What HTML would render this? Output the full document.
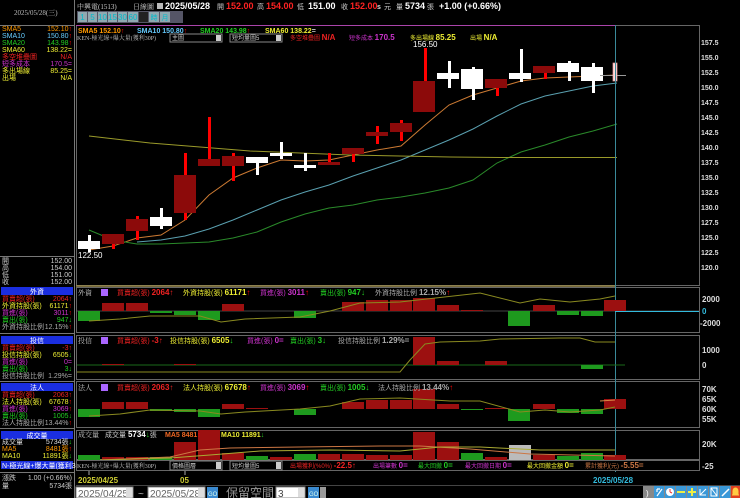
<!DOCTYPE html>
<html><head><meta charset="utf-8"><style>
html,body{margin:0;padding:0;background:#000;width:740px;height:498px;overflow:hidden}
svg{display:block}
text{font-family:"Liberation Sans","Noto Sans CJK TC",sans-serif;font-size:7px}
.m{font-family:"Liberation Serif","Noto Serif CJK SC",serif}
.ax{font-size:8px;font-weight:bold;fill:#ddd}
</style></head><body>
<svg width="740" height="498" viewBox="0 0 740 498" xmlns="http://www.w3.org/2000/svg">
<rect width="740" height="498" fill="#000"/>
<line x1="74.5" y1="0" x2="74.5" y2="498" stroke="#777"/>
<line x1="0" y1="25.5" x2="74" y2="25.5" stroke="#777"/>
<line x1="0" y1="256.5" x2="74" y2="256.5" stroke="#777"/>
<text x="14" y="15" fill="#bbb" class="m">2025/05/28(三)</text>
<g class="m">
<text x="2" y="31" fill="#f90">SMA5</text><text x="72" y="31" fill="#f90" text-anchor="end">152.10<tspan fill="#f00">↑</tspan></text>
<text x="2" y="38" fill="#6cf">SMA10</text><text x="72" y="38" fill="#6cf" text-anchor="end">150.80<tspan fill="#f00">↑</tspan></text>
<text x="2" y="45" fill="#2c2">SMA20</text><text x="72" y="45" fill="#2c2" text-anchor="end">143.98<tspan fill="#f00">↑</tspan></text>
<text x="2" y="52" fill="#ee3">SMA60</text><text x="72" y="52" fill="#ee3" text-anchor="end">138.22=</text>
<text x="2" y="59" fill="#e22">多空堆疊圖</text><text x="72" y="59" fill="#e22" text-anchor="end">N/A</text>
<text x="2" y="66" fill="#c3c">短多成本</text><text x="72" y="66" fill="#c3c" text-anchor="end">170.5=</text>
<text x="2" y="73" fill="#ee3">多出場線</text><text x="72" y="73" fill="#ee3" text-anchor="end">85.25=</text>
<text x="2" y="80" fill="#ee3">出場</text><text x="72" y="80" fill="#ee3" text-anchor="end">N/A</text>
<text x="2" y="263" fill="#ccc">開</text><text x="72" y="263" fill="#ccc" text-anchor="end">152.00</text>
<text x="2" y="270" fill="#ccc">高</text><text x="72" y="270" fill="#ccc" text-anchor="end">154.00</text>
<text x="2" y="277" fill="#ccc">低</text><text x="72" y="277" fill="#ccc" text-anchor="end">151.00</text>
<text x="2" y="284" fill="#ccc">收</text><text x="72" y="284" fill="#ccc" text-anchor="end">152.00</text>
</g>
<g class="m">
<rect x="1" y="287" width="72" height="8" fill="#1a2ee0"/><text x="37" y="294" fill="#fff" text-anchor="middle">外資</text>
<text x="2" y="301" fill="#e22">買賣超(張)</text><text x="72" y="301" fill="#e22" text-anchor="end">2064↑</text>
<text x="2" y="308" fill="#ee3">外資持股(張)</text><text x="72" y="308" fill="#ee3" text-anchor="end">61171<tspan fill="#f00">↑</tspan></text>
<text x="2" y="315" fill="#c3c">買進(張)</text><text x="72" y="315" fill="#c3c" text-anchor="end">3011<tspan fill="#f00">↑</tspan></text>
<text x="2" y="322" fill="#2c2">賣出(張)</text><text x="72" y="322" fill="#2c2" text-anchor="end">947↓</text>
<text x="2" y="329" fill="#aaa">外資持股比例</text><text x="72" y="329" fill="#aaa" text-anchor="end">12.15%<tspan fill="#f00">↑</tspan></text>
<line x1="0" y1="333.5" x2="74" y2="333.5" stroke="#777"/>
<rect x="1" y="336" width="72" height="8" fill="#1a2ee0"/><text x="37" y="343" fill="#fff" text-anchor="middle">投信</text>
<text x="2" y="350" fill="#e22">買賣超(張)</text><text x="72" y="350" fill="#e22" text-anchor="end">-3↑</text>
<text x="2" y="357" fill="#ee3">投信持股(張)</text><text x="72" y="357" fill="#ee3" text-anchor="end">6505<tspan fill="#2c2">↓</tspan></text>
<text x="2" y="364" fill="#c3c">買進(張)</text><text x="72" y="364" fill="#c3c" text-anchor="end">0=</text>
<text x="2" y="371" fill="#2c2">賣出(張)</text><text x="72" y="371" fill="#2c2" text-anchor="end">3↓</text>
<text x="2" y="378" fill="#aaa">投信持股比例</text><text x="72" y="378" fill="#aaa" text-anchor="end">1.29%=</text>
<line x1="0" y1="381.5" x2="74" y2="381.5" stroke="#777"/>
<rect x="1" y="383" width="72" height="8" fill="#1a2ee0"/><text x="37" y="390" fill="#fff" text-anchor="middle">法人</text>
<text x="2" y="397" fill="#e22">買賣超(張)</text><text x="72" y="397" fill="#e22" text-anchor="end">2063↑</text>
<text x="2" y="404" fill="#ee3">法人持股(張)</text><text x="72" y="404" fill="#ee3" text-anchor="end">67678<tspan fill="#f00">↑</tspan></text>
<text x="2" y="411" fill="#c3c">買進(張)</text><text x="72" y="411" fill="#c3c" text-anchor="end">3069<tspan fill="#f00">↑</tspan></text>
<text x="2" y="418" fill="#2c2">賣出(張)</text><text x="72" y="418" fill="#2c2" text-anchor="end">1005↓</text>
<text x="2" y="425" fill="#aaa">法人持股比例</text><text x="72" y="425" fill="#aaa" text-anchor="end">13.44%<tspan fill="#f00">↑</tspan></text>
<line x1="0" y1="428.5" x2="74" y2="428.5" stroke="#777"/>
<rect x="1" y="431" width="72" height="8" fill="#1a2ee0"/><text x="37" y="438" fill="#fff" text-anchor="middle">成交量</text>
<text x="2" y="444" fill="#ddd">成交量</text><text x="72" y="444" fill="#ddd" text-anchor="end">5734張<tspan fill="#2c2">↓</tspan></text>
<text x="2" y="451" fill="#f90">MA5</text><text x="72" y="451" fill="#f90" text-anchor="end">8481張<tspan fill="#f00">↑</tspan></text>
<text x="2" y="458" fill="#ee3">MA10</text><text x="72" y="458" fill="#ee3" text-anchor="end">11891張<tspan fill="#2c2">↓</tspan></text>
<rect x="1" y="461" width="72" height="8" fill="#1a2ee0"/><text x="2" y="468" fill="#fff">N-極光線+爆大量(獲利30</text>
<line x1="0" y1="472.5" x2="74" y2="472.5" stroke="#777"/>
<text x="2" y="480" fill="#ccc">漲跌</text><text x="72" y="480" fill="#ccc" text-anchor="end">1.00 (+0.66%)</text>
<text x="2" y="488" fill="#ccc">量</text><text x="72" y="488" fill="#ccc" text-anchor="end">5734張</text>
</g>
<g>
<text x="77" y="9" fill="#ccc" class="m">中興電(1513)</text>
<text x="133" y="9" fill="#ccc" class="m">日線圖</text>
<rect x="157" y="3" width="6" height="6" fill="#bbb"/>
<text x="165" y="9" fill="#fff" style="font-size:9px;font-weight:bold">2025/05/28</text>
<text x="217" y="9" fill="#ccc">開</text><text x="226" y="9" fill="#f22" style="font-size:9px;font-weight:bold">152.00</text>
<text x="257" y="9" fill="#ccc">高</text><text x="266" y="9" fill="#f22" style="font-size:9px;font-weight:bold">154.00</text>
<text x="297" y="9" fill="#ccc">低</text><text x="308" y="9" fill="#fff" style="font-size:9px;font-weight:bold">151.00</text>
<text x="341" y="9" fill="#ccc">收</text><text x="350" y="9" fill="#f22" style="font-size:9px;font-weight:bold">152.00</text>
<text x="377" y="9" fill="#ddd" style="font-weight:bold">s</text><text x="384" y="9" fill="#ccc">元</text>
<text x="396" y="9" fill="#ccc">量</text><text x="405" y="9" fill="#fff" style="font-size:9px;font-weight:bold">5734</text><text x="427" y="9" fill="#ccc">張</text>
<text x="439" y="9" fill="#fff" style="font-size:9px;font-weight:bold">+1.00 (+0.66%)</text>
</g>
<g style="font-size:8px">
<rect x="77" y="11" width="106" height="12" fill="#556"/>
<rect x="78" y="12" width="9" height="10" fill="#90a8b0"/><text x="82.5" y="20" fill="#0bc" text-anchor="middle" style="font-size:8px">1</text>
<rect x="88" y="12" width="9" height="10" fill="#90a8b0"/><text x="92.5" y="20" fill="#0bc" text-anchor="middle" style="font-size:8px">5</text>
<rect x="98" y="12" width="9" height="10" fill="#90a8b0"/><text x="102.5" y="20" fill="#0bc" text-anchor="middle" style="font-size:8px">10</text>
<rect x="108" y="12" width="9" height="10" fill="#90a8b0"/><text x="112.5" y="20" fill="#0bc" text-anchor="middle" style="font-size:8px">15</text>
<rect x="118" y="12" width="9" height="10" fill="#90a8b0"/><text x="122.5" y="20" fill="#0bc" text-anchor="middle" style="font-size:8px">30</text>
<rect x="128" y="12" width="10" height="10" fill="#90a8b0"/><text x="133" y="20" fill="#0bc" text-anchor="middle" style="font-size:8px">60</text>
<rect x="139" y="12" width="9" height="10" fill="#222"/>
<rect x="149" y="12" width="10" height="10" fill="#90a8b0"/><text x="154" y="20" fill="#0bc" text-anchor="middle">時</text>
<rect x="160" y="12" width="10" height="10" fill="#90a8b0"/><text x="165" y="20" fill="#0bc" text-anchor="middle">月</text>
</g>
<rect x="76.5" y="25.5" width="623" height="260" fill="none" stroke="#666"/>
<line x1="76" y1="25.5" x2="615" y2="25.5" stroke="#a4a"/>
<g style="font-size:8px;font-weight:bold">
<text x="78" y="33" fill="#f90">SMA5 152.10<tspan fill="#f00">↑</tspan></text>
<text x="137" y="33" fill="#6cf">SMA10 150.80<tspan fill="#f00">↑</tspan></text>
<text x="200" y="33" fill="#2c2">SMA20 143.98<tspan fill="#f00">↑</tspan></text>
<text x="265" y="33" fill="#ee3">SMA60 138.22<tspan fill="#ccc">=</tspan></text>
</g>
<text x="77" y="40" fill="#bbb" class="m" style="font-size:6px">KEN-極光線+爆大量(獲利30P)</text>
<rect x="170" y="34" width="52" height="8" fill="#000" stroke="#888"/><text x="172" y="40" fill="#ccc" style="font-size:6px">主圖</text><rect x="216" y="35" width="5" height="6" fill="#ccc"/>
<rect x="230" y="34" width="52" height="8" fill="#000" stroke="#888"/><text x="232" y="40" fill="#ccc" style="font-size:6px">短均量圖5</text><rect x="276" y="35" width="5" height="6" fill="#ccc"/>
<text x="290" y="40" fill="#e22" style="font-size:6px">多空堆疊圖 <tspan style="font-size:8px;font-weight:bold">N/A</tspan></text>
<text x="349" y="40" fill="#c3c" style="font-size:6px">短多成本 <tspan style="font-size:8px;font-weight:bold">170.5</tspan></text>
<text x="410" y="40" fill="#ee3" style="font-size:6px">多出場線 <tspan style="font-size:8px;font-weight:bold">85.25</tspan></text>
<text x="470" y="40" fill="#ee3" style="font-size:6px">出場 <tspan style="font-size:8px;font-weight:bold">N/A</tspan></text>
<text x="413" y="47" fill="#fff" style="font-size:8px">156.50</text>
<text x="78" y="258" fill="#fff" style="font-size:8px">122.50</text>
<g class="ax">
<text x="701" y="45">157.5</text><text x="701" y="60">155.0</text><text x="701" y="75">152.5</text><text x="701" y="90">150.0</text>
<text x="701" y="105">147.5</text><text x="701" y="120">145.0</text><text x="701" y="135">142.5</text><text x="701" y="150">140.0</text>
<text x="701" y="165">137.5</text><text x="701" y="180">135.0</text><text x="701" y="195">132.5</text><text x="701" y="210">130.0</text>
<text x="701" y="225">127.5</text><text x="701" y="240">125.0</text><text x="701" y="255">122.5</text><text x="701" y="270">120.0</text>
</g>
<polyline fill="none" stroke="#cc7a33" stroke-width="1" points="89,250 113,246 137,238 161,235 185,220 209,195 233,178 257,168 281,160 305,161 329,160 353,155 377,150 401,146 425,125 449,105 473,95 497,88 521,81 545,78 569,77 593,76 617,75"/>
<polyline fill="none" stroke="#5aa0b0" stroke-width="1" points="137,242 161,240 185,236 209,229 233,220 257,210 281,200 305,192 329,185 353,176 377,168 401,160 425,150 449,140 473,129 497,116 521,104 545,96 569,91 593,86 617,83"/>
<polyline fill="none" stroke="#2a8a2a" stroke-width="1" points="89,230 113,240 137,244 161,244 185,243 209,242 233,238 257,232 281,222 305,214 329,208 353,205 377,200 401,197 425,193 449,188 473,180 497,163 521,152 545,145 569,137 593,131 617,124"/>
<polyline fill="none" stroke="#9a9a2a" stroke-width="1" points="89,136 150,143 200,147 250,151 300,153 350,155 400,156 450,157 500,157.5 617,157.5"/>
<g>
<rect x="88" y="235" width="3" height="17" fill="#fff"/><rect x="78" y="241" width="22" height="8" fill="#fff"/>
<rect x="112" y="234" width="3" height="15" fill="#f00"/><rect x="102" y="234" width="22" height="10" fill="#8c0a0a"/>
<rect x="136" y="216" width="3" height="24" fill="#f00"/><rect x="126" y="219" width="22" height="12" fill="#8c0a0a"/>
<rect x="160" y="208" width="3" height="21" fill="#fff"/><rect x="150" y="217" width="22" height="9" fill="#fff"/>
<rect x="184" y="153" width="3" height="67" fill="#f00"/><rect x="174" y="175" width="22" height="38" fill="#8c0a0a"/>
<rect x="208" y="117" width="3" height="49" fill="#f00"/><rect x="198" y="159" width="22" height="7" fill="#8c0a0a"/>
<rect x="232" y="153" width="3" height="28" fill="#f00"/><rect x="222" y="156" width="22" height="10" fill="#8c0a0a"/>
<rect x="256" y="157" width="3" height="18" fill="#fff"/><rect x="246" y="157" width="22" height="6" fill="#fff"/>
<rect x="280" y="142" width="3" height="17" fill="#fff"/><rect x="270" y="153" width="22" height="3" fill="#fff"/>
<rect x="304" y="153" width="3" height="18" fill="#fff"/><rect x="294" y="165" width="22" height="3" fill="#fff"/>
<rect x="328" y="153" width="3" height="12" fill="#f00"/><rect x="318" y="162" width="22" height="3" fill="#8c0a0a"/>
<rect x="352" y="148" width="3" height="14" fill="#f00"/><rect x="342" y="148" width="22" height="6" fill="#8c0a0a"/>
<rect x="376" y="126" width="3" height="18" fill="#f00"/><rect x="366" y="132" width="22" height="4" fill="#8c0a0a"/>
<rect x="400" y="120" width="3" height="21" fill="#f00"/><rect x="390" y="123" width="22" height="9" fill="#8c0a0a"/>
<rect x="424" y="48" width="3" height="64" fill="#f00"/><rect x="413" y="81" width="22" height="31" fill="#8c0a0a"/>
<rect x="448" y="61" width="3" height="27" fill="#fff"/><rect x="437" y="73" width="22" height="6" fill="#fff"/>
<rect x="472" y="67" width="3" height="33" fill="#fff"/><rect x="461" y="69" width="22" height="20" fill="#fff"/>
<rect x="496" y="79" width="3" height="17" fill="#f00"/><rect x="485" y="79" width="22" height="9" fill="#8c0a0a"/>
<rect x="520" y="49" width="3" height="33" fill="#fff"/><rect x="509" y="73" width="22" height="6" fill="#fff"/>
<rect x="544" y="66" width="3" height="13" fill="#f00"/><rect x="533" y="66" width="22" height="7" fill="#8c0a0a"/>
<rect x="568" y="61" width="3" height="20" fill="#fff"/><rect x="557" y="63" width="22" height="9" fill="#fff"/>
<rect x="592" y="63" width="3" height="30" fill="#fff"/><rect x="581" y="67" width="22" height="14" fill="#fff"/>
<line x1="600" y1="75.5" x2="626" y2="75.5" stroke="#999"/>
<rect x="613" y="63" width="4" height="18" fill="#fdd" stroke="#e99" stroke-width="0.7"/>
</g>
<g fill="none" stroke="#666">
<rect x="76.5" y="287.5" width="623" height="45"/>
<rect x="76.5" y="335.5" width="623" height="44"/>
<rect x="76.5" y="381.5" width="623" height="46"/>
<rect x="76.5" y="430.5" width="623" height="29"/>
</g>
<line x1="76" y1="286" x2="615" y2="286" stroke="#9a8a4a" stroke-width="1.5"/>
<line x1="615.5" y1="25" x2="615.5" y2="472" stroke="#3a8a9a"/>
<g>
<line x1="77" y1="311" x2="699" y2="311" stroke="#444"/>
<line x1="615" y1="311.5" x2="699" y2="311.5" stroke="#3bd"/>
<g fill="#1e9a1e"><rect x="78" y="311" width="22" height="10"/><rect x="150" y="311" width="22" height="2"/><rect x="174" y="311" width="22" height="4"/><rect x="198" y="311" width="22" height="9"/><rect x="294" y="311" width="22" height="7"/><rect x="508" y="311" width="22" height="15"/><rect x="557" y="311" width="22" height="4"/><rect x="581" y="311" width="22" height="5"/></g>
<g fill="#9c1010"><rect x="102" y="303" width="22" height="8"/><rect x="126" y="303" width="22" height="8"/><rect x="222" y="304" width="22" height="7"/><rect x="342" y="302" width="22" height="9"/><rect x="366" y="300" width="22" height="11"/><rect x="390" y="300" width="22" height="11"/><rect x="413" y="298" width="22" height="13"/><rect x="437" y="305" width="22" height="6"/><rect x="461" y="310" width="22" height="1"/><rect x="533" y="305" width="22" height="6"/><rect x="604" y="300" width="22" height="11"/></g>
<polyline fill="none" stroke="#8a8a20" points="89,321 120,319 150,316 200,316 221,322 245,319 300,317 330,311 360,303 400,302 480,293 520,303 540,299 570,302 600,299 615,296"/>
<text x="78" y="295" fill="#ccc" class="m">外資</text><rect x="101" y="289" width="7" height="7" fill="#a6f"/>
<text x="117" y="295" fill="#e22">買賣超(張) <tspan font-weight="bold" font-size="8">2064↑</tspan></text>
<text x="183" y="295" fill="#ee3">外資持股(張) <tspan font-weight="bold" font-size="8">61171<tspan fill="#f00">↑</tspan></tspan></text>
<text x="260" y="295" fill="#c3c">買進(張) <tspan font-weight="bold" font-size="8">3011<tspan fill="#f00">↑</tspan></tspan></text>
<text x="320" y="295" fill="#2c2">賣出(張) <tspan font-weight="bold" font-size="8">947↓</tspan></text>
<text x="375" y="295" fill="#aaa">外資持股比例 <tspan font-weight="bold" font-size="8">12.15%<tspan fill="#f00">↑</tspan></tspan></text>
<text class="ax" x="702" y="302">2000</text><text class="ax" x="702" y="314" style="fill:#3bd">0</text><text class="ax" x="700" y="326">-2000</text>
</g>
<g>
<line x1="77" y1="365" x2="625" y2="365" stroke="#1a6a1a"/>
<g fill="#9c1010"><rect x="413" y="337" width="22" height="28"/><rect x="437" y="361" width="22" height="4"/><rect x="485" y="361" width="22" height="4"/><rect x="102" y="364" width="22" height="1"/><rect x="174" y="364" width="22" height="1"/></g>
<rect x="581" y="365" width="22" height="4" fill="#1e9a1e"/>
<polyline fill="none" stroke="#8a8a20" points="77,372 400,372 410,360 425,344 440,342 480,341 500,339 560,338 580,338 595,342 615,342"/>
<text x="78" y="343" fill="#ccc" class="m">投信</text><rect x="101" y="337" width="7" height="7" fill="#a6f"/>
<text x="117" y="343" fill="#e22">買賣超(張) <tspan font-weight="bold" font-size="8">-3↑</tspan></text>
<text x="170" y="343" fill="#ee3">投信持股(張) <tspan font-weight="bold" font-size="8">6505<tspan fill="#2c2">↓</tspan></tspan></text>
<text x="247" y="343" fill="#c3c">買進(張) <tspan font-weight="bold" font-size="8">0=</tspan></text>
<text x="290" y="343" fill="#2c2">賣出(張) <tspan font-weight="bold" font-size="8">3↓</tspan></text>
<text x="338" y="343" fill="#aaa">投信持股比例 <tspan font-weight="bold" font-size="8">1.29%=</tspan></text>
<text class="ax" x="702" y="353">1000</text><text class="ax" x="702" y="368">0</text>
</g>
<g>
<g fill="#1e9a1e"><rect x="78" y="409" width="22" height="8"/><rect x="150" y="409" width="22" height="2"/><rect x="174" y="409" width="22" height="3"/><rect x="198" y="409" width="22" height="8"/><rect x="294" y="409" width="22" height="6"/><rect x="461" y="409" width="22" height="1"/><rect x="508" y="409" width="22" height="12"/><rect x="557" y="409" width="22" height="4"/><rect x="581" y="409" width="22" height="5"/></g>
<g fill="#9c1010"><rect x="102" y="402" width="22" height="7"/><rect x="126" y="402" width="22" height="7"/><rect x="222" y="404" width="22" height="5"/><rect x="246" y="408" width="22" height="1"/><rect x="342" y="402" width="22" height="7"/><rect x="366" y="400" width="22" height="9"/><rect x="390" y="400" width="22" height="9"/><rect x="413" y="389" width="22" height="20"/><rect x="437" y="404" width="22" height="5"/><rect x="485" y="408" width="22" height="1"/><rect x="533" y="404" width="22" height="5"/><rect x="604" y="399" width="22" height="10"/></g>
<polyline fill="none" stroke="#8a8a20" points="89,416 120,414 150,410 200,411 221,414 245,412 300,409 330,406 360,399 400,398 450,401 480,401 520,412 545,410 570,412 600,410 615,407"/>
<polyline fill="none" stroke="#d84" points="600,401 615,400"/>
<text x="78" y="390" fill="#ccc" class="m">法人</text><rect x="101" y="384" width="7" height="7" fill="#a6f"/>
<text x="117" y="390" fill="#e22">買賣超(張) <tspan font-weight="bold" font-size="8">2063↑</tspan></text>
<text x="183" y="390" fill="#ee3">法人持股(張) <tspan font-weight="bold" font-size="8">67678<tspan fill="#f00">↑</tspan></tspan></text>
<text x="260" y="390" fill="#c3c">買進(張) <tspan font-weight="bold" font-size="8">3069<tspan fill="#f00">↑</tspan></tspan></text>
<text x="320" y="390" fill="#2c2">賣出(張) <tspan font-weight="bold" font-size="8">1005↓</tspan></text>
<text x="378" y="390" fill="#aaa">法人持股比例 <tspan font-weight="bold" font-size="8">13.44%<tspan fill="#f00">↑</tspan></tspan></text>
<text class="ax" x="702" y="392">70K</text><text class="ax" x="702" y="402">65K</text><text class="ax" x="702" y="412">60K</text><text class="ax" x="702" y="422">55K</text>
</g>
<g>
<g fill="#1e9a1e"><rect x="78" y="455" width="22" height="5"/><rect x="150" y="457" width="22" height="3"/><rect x="246" y="456" width="22" height="4"/><rect x="294" y="454" width="22" height="6"/><rect x="461" y="453" width="22" height="7"/><rect x="557" y="456" width="22" height="4"/><rect x="581" y="453" width="22" height="7"/></g>
<g fill="#9c1010"><rect x="102" y="457" width="22" height="3"/><rect x="126" y="457" width="22" height="3"/><rect x="174" y="442" width="22" height="18"/><rect x="198" y="430" width="22" height="30"/><rect x="222" y="453" width="22" height="7"/><rect x="270" y="457" width="22" height="3"/><rect x="318" y="454" width="22" height="6"/><rect x="342" y="454" width="22" height="6"/><rect x="366" y="455" width="22" height="5"/><rect x="390" y="455" width="22" height="5"/><rect x="413" y="432" width="22" height="28"/><rect x="437" y="442" width="22" height="18"/><rect x="485" y="457" width="22" height="3"/><rect x="533" y="455" width="22" height="5"/><rect x="604" y="455" width="22" height="5"/></g>
<rect x="509" y="445" width="22" height="15" fill="#bbb"/>
<polyline fill="none" stroke="#c74" points="100,460 170,457 200,450 230,448 300,447 380,446 420,446 470,449 530,454 615,456"/>
<polyline fill="none" stroke="#aa3" points="100,460 170,458 210,455 260,451 330,450 400,451 440,447 480,447 540,450 615,450"/>
<text x="78" y="437" fill="#ccc" class="m">成交量</text>
<text x="105" y="437" fill="#ccc">成交量 <tspan font-weight="bold" font-size="8" fill="#fff">5734<tspan fill="#2c2">↓</tspan></tspan>張</text>
<text x="165" y="437" fill="#e62" font-weight="bold" font-size="8">MA5 8481<tspan fill="#f00">↑</tspan></text>
<text x="221" y="437" fill="#ee3" font-weight="bold" font-size="8">MA10 11891<tspan fill="#2c2">↓</tspan></text>
<text class="ax" x="702" y="447">20K</text><text class="ax" x="702" y="469">-25</text>
</g>
<rect x="76.5" y="460.5" width="623" height="10" fill="#000" stroke="#666"/>
<text x="77" y="468" fill="#bbb" class="m" style="font-size:6px">KEN-極光線+爆大量(獲利30P)</text>
<rect x="170" y="461" width="52" height="9" fill="#000" stroke="#888"/><text x="172" y="468" fill="#ccc" style="font-size:6px">價格圖層</text><rect x="216" y="462" width="5" height="7" fill="#ccc"/>
<rect x="230" y="461" width="52" height="9" fill="#000" stroke="#888"/><text x="232" y="468" fill="#ccc" style="font-size:6px">短均量圖5</text><rect x="276" y="462" width="5" height="7" fill="#ccc"/>
<text x="290" y="468" fill="#e22" style="font-size:6px">出場獲利(%0%) <tspan font-weight="bold" font-size="8">-22.5↑</tspan></text>
<text x="373" y="468" fill="#c3c" style="font-size:6px">出場筆數 <tspan font-weight="bold" font-size="8">0=</tspan></text>
<text x="418" y="468" fill="#2c2" style="font-size:6px">最大回撤 <tspan font-weight="bold" font-size="8">0=</tspan></text>
<text x="465" y="468" fill="#c3c" style="font-size:6px">最大回撤日期 <tspan font-weight="bold" font-size="8">0=</tspan></text>
<text x="527" y="468" fill="#ee3" style="font-size:6px">最大回撤金額 <tspan font-weight="bold" font-size="8">0=</tspan></text>
<text x="585" y="468" fill="#c74" style="font-size:6px">累計獲利(元) <tspan font-weight="bold" font-size="8">-5.55=</tspan></text>
<line x1="89" y1="471" x2="89" y2="475" stroke="#aaa"/><line x1="185" y1="471" x2="185" y2="475" stroke="#aaa"/>
<text x="78" y="483" fill="#cc3" style="font-size:8px;font-weight:bold">2025/04/25</text>
<text x="180" y="483" fill="#cc3" style="font-size:8px;font-weight:bold">05</text>
<text x="593" y="483" fill="#3bd" style="font-size:8px;font-weight:bold">2025/05/28</text>
<line x1="76" y1="485.5" x2="740" y2="485.5" stroke="#444"/>
<rect x="76" y="487" width="57" height="11" fill="#fff" stroke="#888"/><text x="78" y="497" fill="#666" style="font-size:10px">2025/04/25</text><rect x="126" y="488" width="6" height="9" fill="#ddd"/>
<text x="138" y="497" fill="#bbb" style="font-size:10px">~</text>
<rect x="148" y="487" width="57" height="11" fill="#fff" stroke="#888"/><text x="150" y="497" fill="#666" style="font-size:10px">2025/05/28</text><rect x="198" y="488" width="6" height="9" fill="#ddd"/>
<rect x="207" y="487" width="11" height="11" fill="#3a8ad0"/><text x="208" y="496" fill="#dfe" style="font-size:6px">GO</text>
<text x="226" y="497" fill="#999" style="font-size:12px">保留空間</text>
<rect x="276" y="487" width="29" height="11" fill="#fff" stroke="#888"/><text x="278" y="497" fill="#444" style="font-size:10px">3</text><rect x="298" y="488" width="6" height="9" fill="#ddd"/>
<rect x="308" y="487" width="11" height="11" fill="#3a8ad0"/><text x="309" y="496" fill="#dfe" style="font-size:6px">GO</text>
<rect x="320" y="487" width="6" height="11" fill="#999"/>
<rect x="643" y="486" width="97" height="12" fill="#888"/>
<g fill="#3a98d8">
<rect x="654" y="486" width="10" height="12"/><rect x="665" y="486" width="10" height="12"/><rect x="676" y="486" width="10" height="12"/><rect x="687" y="486" width="10" height="12"/><rect x="698" y="486" width="10" height="12"/><rect x="709" y="486" width="10" height="12"/><rect x="720" y="486" width="10" height="12"/>
</g>
<rect x="731" y="486" width="9" height="12" fill="#e04020"/>
<path d="M657,496 L662,489 M657,489 L657,492 M657,489 L660,489" stroke="#fff" stroke-width="1.2" fill="none"/>
<circle cx="670" cy="492" r="4" fill="#fff"/><path d="M670,492 L670,489 M670,492 L672,493" stroke="#e33" fill="none"/>
<rect x="677" y="491" width="8" height="2" fill="#ee4"/>
<path d="M692,488 V496 M688,492 H696" stroke="#ee4" stroke-width="2"/>
<path d="M700,495 L706,489 M700,489 V495 H706" stroke="#fff" fill="none"/>
<path d="M711,488 H717 V496 H711 Z M711,488 L717,496" stroke="#fff" fill="none"/>
<path d="M722,496 L729,489" stroke="#fff" stroke-width="1.5"/>
<path d="M732,495 H739 M733,495 V491 A2.5,3 0 0 1 738,491 V495" stroke="#fc4" fill="#fc4"/>
<text x="646" y="496" fill="#fff" style="font-size:8px">)</text>
</svg>
</body></html>
